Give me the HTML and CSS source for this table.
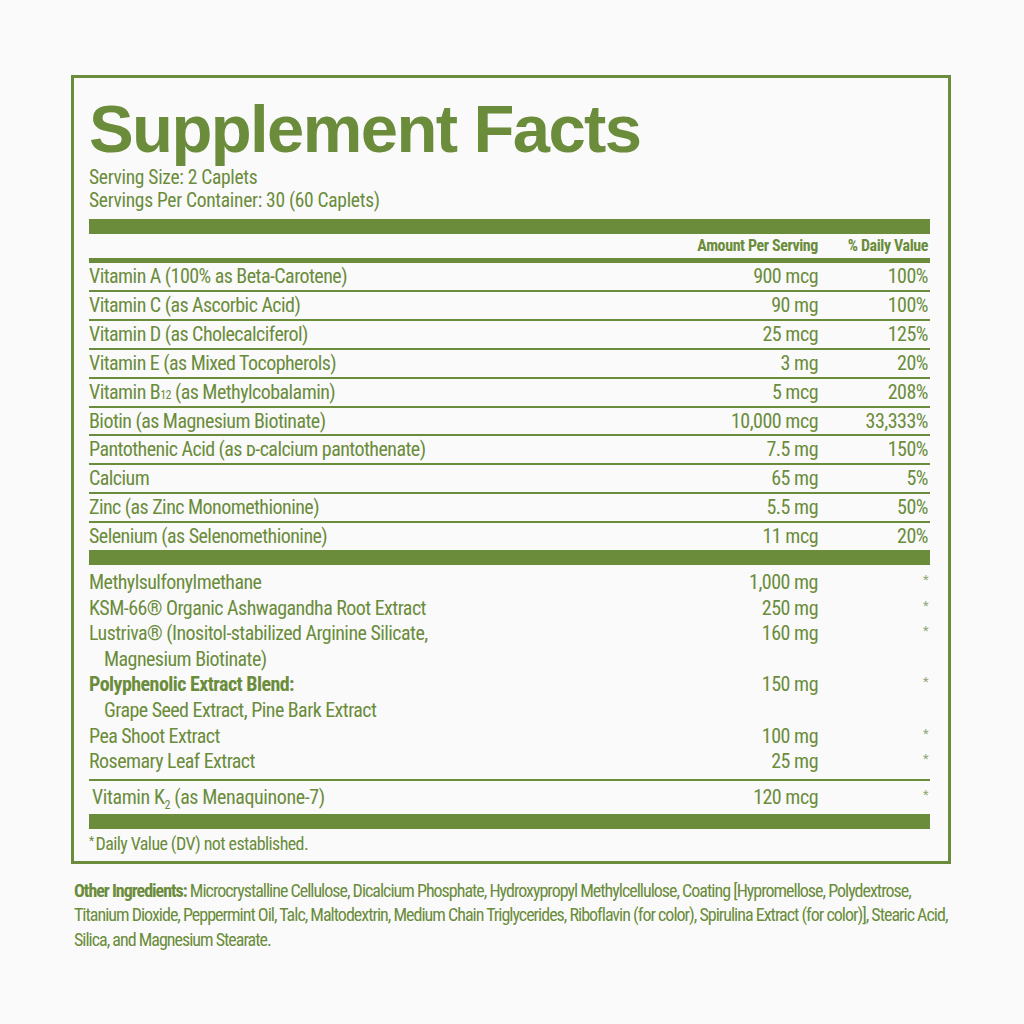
FILE: index.html
```html
<!DOCTYPE html>
<html lang="en">
<head>
    <meta charset="UTF-8">
    <meta name="viewport" content="width=device-width, initial-scale=1.0">
    <title>Supplement Facts</title>
    <link rel="stylesheet" href="styles.css">
</head>
<body>
    <div class="panel">
        <h1 class="title">Supplement Facts</h1>
        <p class="serving">Serving Size: 2 Caplets<br>Servings Per Container: 30 (60 Caplets)</p>

        <div class="bar"></div>

        <div class="row head">
            <span></span>
            <span class="amt">Amount Per Serving</span>
            <span class="dv">% Daily Value</span>
        </div>
        <div class="rule"></div>

        <div class="vitamins">
            <div class="row"><span>Vitamin A (100% as Beta-Carotene)</span><span class="amt">900 mcg</span><span class="dv">100%</span></div>
            <div class="row"><span>Vitamin C (as Ascorbic Acid)</span><span class="amt">90 mg</span><span class="dv">100%</span></div>
            <div class="row"><span>Vitamin D (as Cholecalciferol)</span><span class="amt">25 mcg</span><span class="dv">125%</span></div>
            <div class="row"><span>Vitamin E (as Mixed Tocopherols)</span><span class="amt">3 mg</span><span class="dv">20%</span></div>
            <div class="row"><span>Vitamin B<small class="sub">12</small> (as Methylcobalamin)</span><span class="amt">5 mcg</span><span class="dv">208%</span></div>
            <div class="row"><span>Biotin (as Magnesium Biotinate)</span><span class="amt">10,000 mcg</span><span class="dv">33,333%</span></div>
            <div class="row"><span>Pantothenic Acid (as <span class="sc">d</span>-calcium pantothenate)</span><span class="amt">7.5 mg</span><span class="dv">150%</span></div>
            <div class="row"><span>Calcium</span><span class="amt">65 mg</span><span class="dv">5%</span></div>
            <div class="row"><span>Zinc (as Zinc Monomethionine)</span><span class="amt">5.5 mg</span><span class="dv">50%</span></div>
            <div class="row"><span>Selenium (as Selenomethionine)</span><span class="amt">11 mcg</span><span class="dv">20%</span></div>
        </div>

        <div class="bar"></div>

        <div class="others">
            <div class="row"><span>Methylsulfonylmethane</span><span class="amt">1,000 mg</span><span class="dv star">*</span></div>
            <div class="row"><span>KSM-66® Organic Ashwagandha Root Extract</span><span class="amt">250 mg</span><span class="dv star">*</span></div>
            <div class="row"><span>Lustriva® (Inositol-stabilized Arginine Silicate,<br><span class="indent">Magnesium Biotinate)</span></span><span class="amt">160 mg</span><span class="dv star">*</span></div>
            <div class="row"><span><b>Polyphenolic Extract Blend:</b><br><span class="indent">Grape Seed Extract, Pine Bark Extract</span></span><span class="amt">150 mg</span><span class="dv star">*</span></div>
            <div class="row"><span>Pea Shoot Extract</span><span class="amt">100 mg</span><span class="dv star">*</span></div>
            <div class="row"><span>Rosemary Leaf Extract</span><span class="amt">25 mg</span><span class="dv star">*</span></div>
        </div>
        <div class="thin"></div>
        <div class="row k2"><span>Vitamin K<sub>2</sub> (as Menaquinone-7)</span><span class="amt">120 mcg</span><span class="dv star">*</span></div>

        <div class="bar"></div>
        <p class="note"><span class="note-star">*</span>Daily Value (DV) not established.</p>
    </div>

    <p class="ingredients"><b>Other Ingredients:</b> Microcrystalline Cellulose, Dicalcium Phosphate, Hydroxypropyl Methylcellulose, Coating [Hypromellose, Polydextrose,<br>Titanium Dioxide, Peppermint Oil, Talc, Maltodextrin, Medium Chain Triglycerides, Riboflavin (for color), Spirulina Extract (for color)], Stearic Acid,<br>Silica, and Magnesium Stearate.</p>
</body>
</html>
```

FILE: styles.css
```css
body {
    margin: 0;
    background-color: #fafafa;
    color: #6a8c3b;
    font-family: "Liberation Sans Narrow", "Roboto Condensed", "DejaVu Sans Condensed", Roboto, sans-serif;
    font-stretch: condensed;
}

.panel {
    width: 880px;
    margin: 75px 0 0 71px;
    padding: 17px 18px 0 15px;
    border: 3px solid #6a8c3b;
    box-sizing: border-box;
}

.title {
    margin: 0;
    font-family: "Liberation Sans", Arial, sans-serif;
    font-stretch: normal;
    font-size: 67px;
    line-height: 67px;
    font-weight: bold;
    letter-spacing: -1.6px;
}

.serving {
    margin: 4px 0 7px;
    font-size: 19.5px;
    line-height: 23px;
    letter-spacing: -0.3px;
}

.bar {
    height: 15px;
    background-color: #6a8c3b;
}

.rule {
    height: 5px;
    background-color: #6a8c3b;
}

.thin {
    height: 2px;
    margin-top: 4px;
    background-color: #6a8c3b;
}

.row {
    display: grid;
    grid-template-columns: 1fr 200px 112px;
    white-space: nowrap;
}

.amt,
.dv {
    text-align: right;
    letter-spacing: -0.5px;
}

.dv {
    padding-right: 2px;
}

.head {
    font-size: 16px;
    line-height: 24px;
    font-weight: bold;
    letter-spacing: -0.4px;
}

.head .amt,
.head .dv {
    letter-spacing: -0.4px;
}

.vitamins .row {
    font-size: 20px;
    line-height: 26.9px;
    letter-spacing: -0.55px;
    border-bottom: 2px solid #6a8c3b;
}

.vitamins .row:last-child {
    border-bottom: none;
}

.sub {
    font-size: 60%;
    line-height: 0;
}

.sc {
    font-variant: small-caps;
}

.others {
    padding-top: 5px;
}

.others .row {
    font-size: 20px;
    line-height: 25.6px;
    letter-spacing: -0.55px;
}

.indent {
    padding-left: 15px;
}

.star {
    font-size: 13px;
    color: #8fa873;
    line-height: 20px;
}

.k2 {
    font-size: 20px;
    line-height: 33px;
    letter-spacing: -0.4px;
    padding-left: 3px;
}

.k2 .star {
    line-height: 28px;
}

sub {
    font-size: 60%;
    line-height: 0;
}

.note {
    margin: 0;
    padding-bottom: 5px;
    font-size: 18px;
    line-height: 25px;
    letter-spacing: -0.6px;
}

.note-star {
    font-size: 12px;
    vertical-align: 5px;
    margin-right: 2px;
}

.ingredients {
    margin: 15px 0 0 74px;
    font-size: 18px;
    line-height: 24.5px;
    letter-spacing: -1px;
    white-space: nowrap;
}
```
